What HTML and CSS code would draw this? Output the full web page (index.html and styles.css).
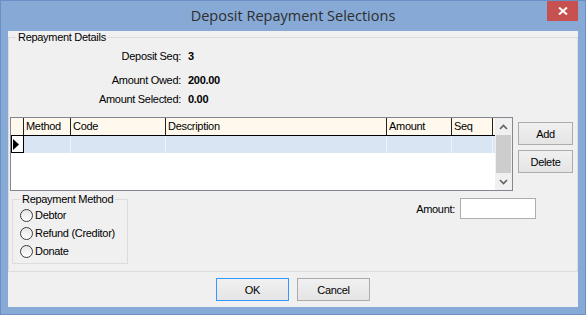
FILE: index.html
```html
<!DOCTYPE html>
<html lang="en">
  <head>
    <meta charset="UTF-8" />
    <meta name="viewport" content="width=device-width, initial-scale=1.0" />
    <title>Deposit Repayment Selections</title>
    <link rel="stylesheet" href="styles.css">
  </head>

  <body>
    <div id="window">
      <div id="titlebar">
        <span class="title">Deposit Repayment Selections</span>
        <button class="close-btn" aria-label="Close">
          <svg width="10" height="8" viewBox="0 0 10 8">
            <path d="M1 0.5 L9 7.5 M9 0.5 L1 7.5" stroke="#fff" stroke-width="2" />
          </svg>
        </button>
      </div>

      <div id="client">
        <fieldset class="group details">
          <legend>Repayment Details</legend>

          <div class="info-row seq">
            <span class="info-label">Deposit Seq:</span>
            <span class="info-value">3</span>
          </div>
          <div class="info-row owed">
            <span class="info-label">Amount Owed:</span>
            <span class="info-value">200.00</span>
          </div>
          <div class="info-row selected">
            <span class="info-label">Amount Selected:</span>
            <span class="info-value">0.00</span>
          </div>

          <div class="list-area">
            <div class="grid">
              <div class="grid-body">
                <div class="grid-row header">
                  <div class="cell rowhead"></div>
                  <div class="cell c-method">Method</div>
                  <div class="cell c-code">Code</div>
                  <div class="cell c-desc">Description</div>
                  <div class="cell c-amount">Amount</div>
                  <div class="cell c-seq">Seq</div>
                </div>
                <div class="grid-row data">
                  <div class="cell rowhead">
                    <svg width="6" height="11" viewBox="0 0 6 11">
                      <path d="M0 0 L6 5.5 L0 11 Z" fill="#000" />
                    </svg>
                  </div>
                  <div class="cell c-method"></div>
                  <div class="cell c-code"></div>
                  <div class="cell c-desc"></div>
                  <div class="cell c-amount"></div>
                  <div class="cell c-seq"></div>
                </div>
              </div>
              <div class="scrollbar">
                <div class="sb-arrow">
                  <svg width="9" height="6" viewBox="0 0 9 6">
                    <path d="M1 5 L4.5 1.5 L8 5" stroke="#606060" stroke-width="1.6" fill="none" />
                  </svg>
                </div>
                <div class="sb-thumb"></div>
                <div class="sb-arrow">
                  <svg width="9" height="6" viewBox="0 0 9 6">
                    <path d="M1 1 L4.5 4.5 L8 1" stroke="#606060" stroke-width="1.6" fill="none" />
                  </svg>
                </div>
              </div>
            </div>
            <div class="side-buttons">
              <button class="btn">Add</button>
              <button class="btn">Delete</button>
            </div>
          </div>

          <div class="lower">
            <fieldset class="group method">
              <legend>Repayment Method</legend>
              <label class="radio"><span class="radio-circle"></span>Debtor</label>
              <label class="radio"><span class="radio-circle"></span>Refund (Creditor)</label>
              <label class="radio"><span class="radio-circle"></span>Donate</label>
            </fieldset>
            <div class="amount-field">
              <span>Amount:</span>
              <span class="textbox"></span>
            </div>
          </div>
        </fieldset>

        <div class="dialog-buttons">
          <button class="btn dialog default">OK</button>
          <button class="btn dialog">Cancel</button>
        </div>
      </div>
    </div>
  </body>
</html>
```

FILE: styles.css
```css
* {
  box-sizing: border-box;
}

body {
  margin: 0;
  font-family: "Liberation Sans", Arial, sans-serif;
  font-size: 11px;
  letter-spacing: -0.3px;
  color: #000;
  background-color: #86a9d6;
}

#window {
  width: 586px;
  height: 315px;
  background-color: #86a9d6;
  border: 1px solid #6b8ec4;
  padding: 0 7px 7px;
  display: flex;
  flex-direction: column;
}

#titlebar {
  height: 30px;
  display: grid;
  grid-template-columns: 1fr auto 1fr;
  align-items: start;
}

#titlebar .title {
  grid-column: 2;
  font-family: "Open Sans", "Noto Sans", sans-serif;
  font-size: 14.5px;
  letter-spacing: 0;
  line-height: 30px;
  color: #2e2e2e;
}

.close-btn {
  grid-column: 3;
  justify-self: end;
  width: 31px;
  height: 20px;
  border: none;
  padding: 0;
  background-color: #c75050;
  display: flex;
  align-items: center;
  justify-content: center;
}

#client {
  flex: 1;
  background-color: #f0f0f0;
  display: flex;
  flex-direction: column;
}

/* group boxes */
.group {
  margin: 0;
  border: 1px solid #dcdcdc;
  min-width: 0;
}

.group legend {
  padding: 0 2px;
  line-height: 12px;
}

.details {
  height: 241px;
  padding: 0 0 0 1px;
}

.details legend {
  margin-left: 6px;
}

.info-row {
  display: flex;
  line-height: 14px;
}

.info-row.seq {
  margin-top: 6px;
}

.info-row.owed {
  margin-top: 10px;
}

.info-row.selected {
  margin-top: 5px;
}

.info-label {
  width: 171px;
  text-align: right;
}

.info-value {
  margin-left: 7px;
  font-weight: bold;
}

/* grid */
.list-area {
  display: flex;
  gap: 5px;
  margin-top: 11px;
}

.grid {
  width: 503px;
  height: 74px;
  border: 1px solid #828790;
  background-color: #fff;
  display: flex;
}

.grid-body {
  flex: 1;
}

.grid-row {
  display: flex;
}

.grid-row.header {
  height: 18px;
  background-color: #fef9ec;
  border-bottom: 1px solid #000;
}

.grid-row.header .cell {
  border-right: 1px solid #222;
  padding-left: 2px;
  line-height: 17px;
}

.grid-row.data {
  height: 17px;
  background-color: #d9e5f3;
}

.grid-row.data .cell {
  border-right: 1px solid #eef3fa;
}

.cell {
  height: 100%;
  white-space: nowrap;
}

.rowhead {
  width: 13px;
}

.grid-row.data .rowhead {
  background-color: #fff;
  border-right: 1px solid #000;
  border-left: 1px solid #000;
  border-bottom: 1px solid #000;
  display: flex;
  align-items: center;
  padding-left: 1px;
}

.c-method {
  width: 47px;
}

.c-code {
  width: 95px;
}

.c-desc {
  width: 221px;
}

.c-amount {
  width: 65px;
}

.c-seq {
  width: 41px;
}

.scrollbar {
  width: 17px;
  display: flex;
  flex-direction: column;
  background-color: #f0f0f0;
}

.sb-arrow {
  height: 17px;
  display: flex;
  align-items: center;
  justify-content: center;
}

.sb-thumb {
  flex: 1;
  margin: 0 1px;
  background-color: #cdcdcd;
}

/* buttons */
.btn {
  font-family: inherit;
  font-size: 11px;
  letter-spacing: inherit;
  color: #000;
  padding: 0;
  border: 1px solid #acacac;
  background: linear-gradient(#f0f0f0, #e5e5e5);
}

.side-buttons {
  display: flex;
  flex-direction: column;
  gap: 5px;
  margin-top: 5px;
}

.side-buttons .btn {
  width: 55px;
  height: 23px;
}

/* lower part */
.lower {
  display: flex;
  justify-content: space-between;
  align-items: flex-start;
  margin-top: 2px;
}

.method {
  width: 116px;
  height: 71px;
  margin-left: 2px;
  padding: 1px 0 0 0;
}

.method legend {
  margin-left: 7px;
}

.radio {
  display: flex;
  align-items: center;
  height: 18px;
}

.radio-circle {
  width: 13px;
  height: 13px;
  margin: 0 2px 0 7px;
  border: 1px solid #3c3c3c;
  border-radius: 50%;
  background: linear-gradient(#e6e6e6, #fff);
}

.amount-field {
  display: flex;
  align-items: center;
  gap: 5px;
  margin-top: 5px;
  margin-right: 41px;
}

.textbox {
  width: 76px;
  height: 21px;
  border: 1px solid #abadb3;
  background-color: #fff;
}

.dialog-buttons {
  display: flex;
  justify-content: center;
  gap: 8px;
  margin-top: 6px;
}

.btn.dialog {
  width: 73px;
  height: 23px;
}

.btn.default {
  border-color: #3399ff;
}
```
